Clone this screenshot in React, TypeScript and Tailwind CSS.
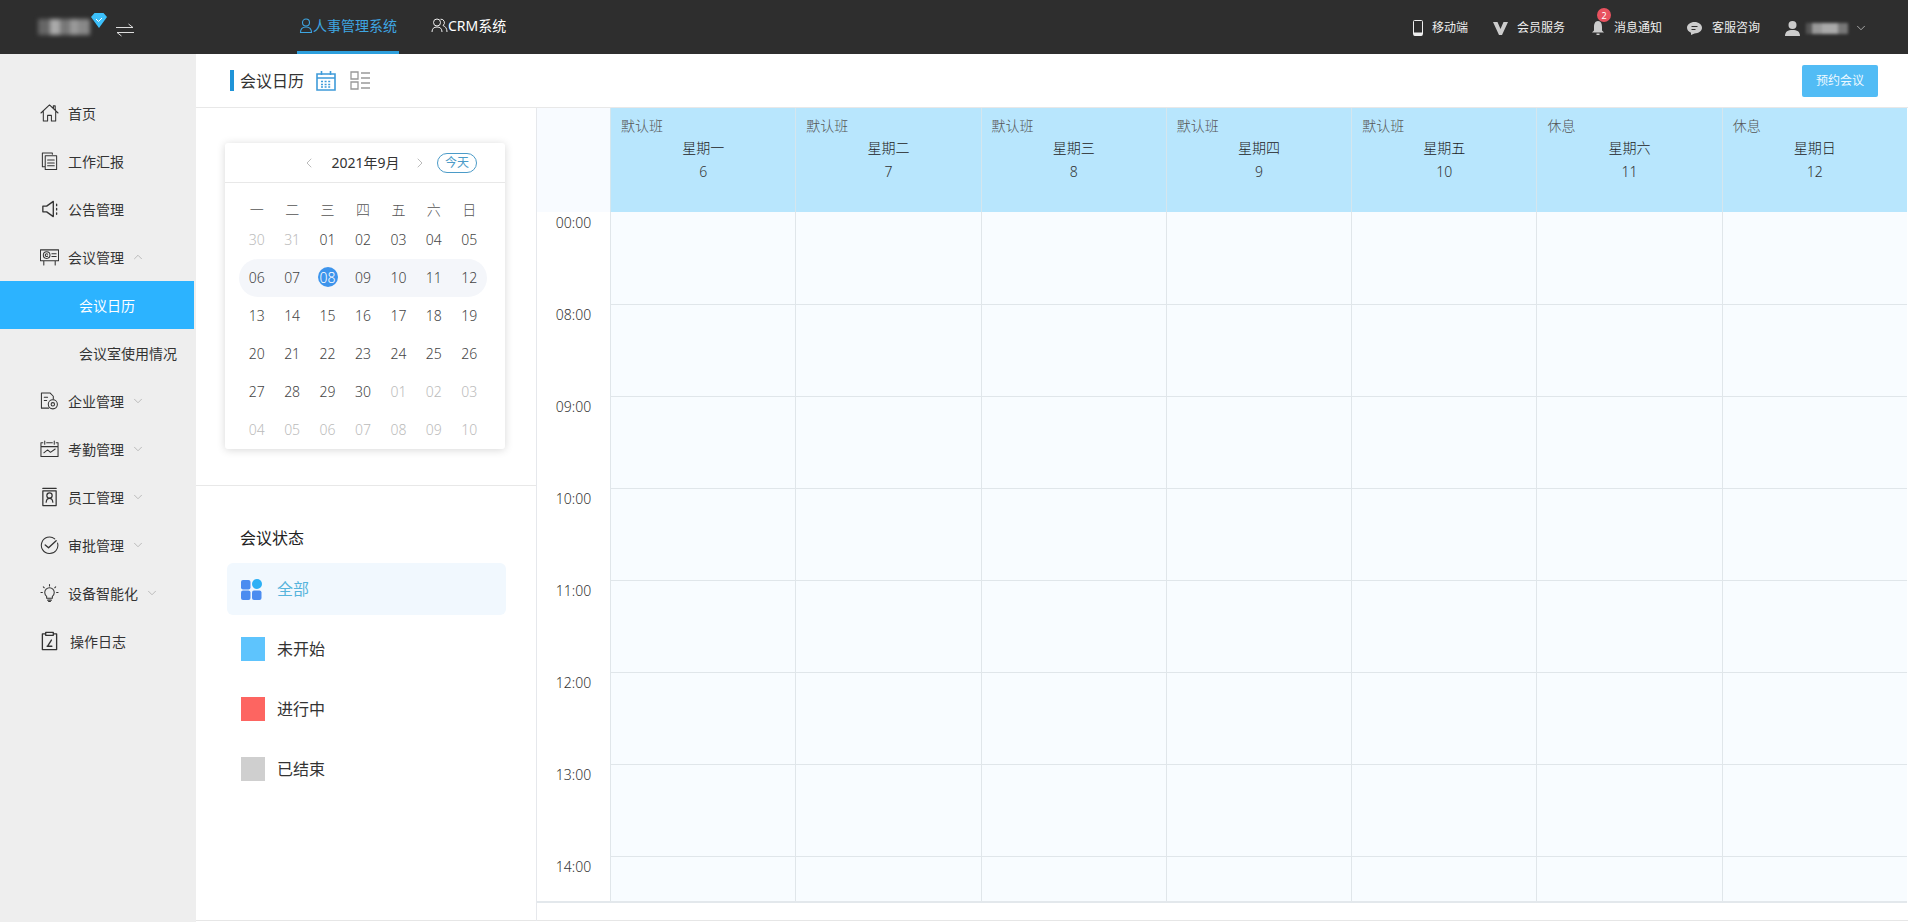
import { ChevronDown, ChevronLeft, ChevronRight, ChevronUp } from "lucide-react";
import type { ReactNode } from "react";

const Stroke = ({ children, size = 20 }: { children: ReactNode; size?: number }) => (
  <svg width={size} height={size} viewBox="0 0 20 20" fill="none" stroke="#333" strokeWidth="1.1" strokeLinejoin="round" strokeLinecap="round">
    {children}
  </svg>
);

const menu = [
  {
    label: "首页",
    icon: (
      <Stroke>
        <path d="M1 10 10 1.5 19 10M3.5 8.5V18.5H8V12.5H12V18.5H16.5V8.5M14 5V2.5H16V7" />
      </Stroke>
    ),
  },
  {
    label: "工作汇报",
    icon: (
      <Stroke>
        <path d="M13 3V1.5H2.5V16H5M5.5 4.5H17.5V19H5.5ZM8 9H15M8 12H15M8 15H15" />
      </Stroke>
    ),
  },
  {
    label: "公告管理",
    icon: (
      <Stroke>
        <path strokeWidth="1.4" d="M3 7H7L14 2V18L7 13H3ZM17.5 5V6.5M17.5 9.5V11M17.5 14V15.5" />
      </Stroke>
    ),
  },
  {
    label: "会议管理",
    arrow: "up",
    icon: (
      <Stroke>
        <path d="M.5 2.5H19.5V14H.5ZM4 14V18.5M16 14V18.5M12.5 6.5H17M12.5 9.5H17" />
        <circle cx="7" cy="8" r="3.5" />
        <path d="M8 7a1.4 1.4 0 1 0 0 2" />
      </Stroke>
    ),
  },
  { label: "会议日历", sub: true, active: true },
  { label: "会议室使用情况", sub: true },
  {
    label: "企业管理",
    arrow: "down",
    icon: (
      <Stroke>
        <path d="M9 17.5H1.5V1.5H10.5L14 5V8M4.5 6H8M4.5 9.5H7" />
        <circle cx="13.5" cy="13.5" r="4.8" />
        <circle cx="13.5" cy="13.5" r="1.8" />
      </Stroke>
    ),
  },
  {
    label: "考勤管理",
    arrow: "down",
    icon: (
      <Stroke>
        <path d="M1 3.5H3M7 3.5H13M17 3.5H19V18H1V3.5M5 1.5V5M15 1.5V5M1 7.5H19M4 14 8 11 11 13.5 16 10" />
      </Stroke>
    ),
  },
  {
    label: "员工管理",
    arrow: "down",
    icon: (
      <Stroke>
        <path strokeWidth="1.3" d="M3 1H17M3 3.5H17V19H3ZM6.5 15.5C6.8 12.5 8 11.5 10 11.5S13.2 12.5 13.5 15.5" />
        <circle cx="10" cy="8.5" r="2.8" strokeWidth="1.3" />
      </Stroke>
    ),
  },
  {
    label: "审批管理",
    arrow: "down",
    icon: (
      <Stroke>
        <path d="M15.5 3.5A8.7 8.7 0 1 0 18.5 8" />
        <path strokeWidth="1.4" d="M5.5 10 9 13 17 5.5" />
      </Stroke>
    ),
  },
  {
    label: "设备智能化",
    arrow: "down",
    icon: (
      <Stroke>
        <path d="M7 13.5C5.5 12.5 5 11 5 9.5A5 5 0 0 1 15 9.5C15 11 14.5 12.5 13 13.5V15.5H7ZM8 17.5H12M9 19H11M1 9.5H2.5M17.5 9.5H19M10 1V2.5M3.5 3.5 4.5 4.5M16.5 3.5 15.5 4.5" />
      </Stroke>
    ),
  },
  {
    label: "操作日志",
    shift: "ml-[2px]",
    icon: (
      <Stroke>
        <path strokeWidth="1.4" d="M6 2.5H2.5V19H17.5V2.5H14M6 1H14V4H6ZM12 9 8.5 14.5M7.5 15.5H12.5" />
      </Stroke>
    ),
  },
];

const topLinks = [
  { label: "移动端", className: "ml-[9px] mr-[25px]", icon: <svg width="10" height="16" viewBox="0 0 10 16" fill="none"><rect x=".5" y=".5" width="9" height="15" rx="1" stroke="#eee" /><rect x="1" y="12.5" width="8" height="3" fill="#eee" /></svg> },
  { label: "会员服务", className: "ml-[9px] mr-[27px]", icon: <svg width="15" height="13" viewBox="0 0 15 13"><path d="M0 0H4.5L7.5 7 10.5 0H15L9 13H6Z" fill="#ccc" /></svg> },
  { label: "消息通知", className: "ml-[10px] mr-[25px]", bell: true, icon: <svg width="12" height="14" viewBox="0 0 12 14"><path d="M6 0C9 0 10 3 10 6V9.5L12 11.5H0L2 9.5V6C2 3 3 0 6 0ZM4.5 12.5H7.5V14H4.5Z" fill="#ccc" /></svg> },
  { label: "客服咨询", className: "ml-[10px] mr-[25px]", icon: <svg width="15" height="13" viewBox="0 0 15 13"><path d="M7.5 0C11.6 0 15 2.5 15 5.8S11.6 11.5 7.5 11.5L4 13V10.7C1.6 9.8 0 8 0 5.8 0 2.5 3.4 0 7.5 0Z" fill="#ccc" /><path d="M4.5 4.5H10.5M4.5 7.5H8.5" stroke="#2e2e2e" strokeWidth="1.2" /></svg> },
];

const weekdays = ["一", "二", "三", "四", "五", "六", "日"];
const dayRows = [
  ["30", "31", "01", "02", "03", "04", "05"],
  ["06", "07", "08", "09", "10", "11", "12"],
  ["13", "14", "15", "16", "17", "18", "19"],
  ["20", "21", "22", "23", "24", "25", "26"],
  ["27", "28", "29", "30", "01", "02", "03"],
  ["04", "05", "06", "07", "08", "09", "10"],
];

const columns = [
  { shift: "默认班", day: "星期一", date: 6 },
  { shift: "默认班", day: "星期二", date: 7 },
  { shift: "默认班", day: "星期三", date: 8 },
  { shift: "默认班", day: "星期四", date: 9 },
  { shift: "默认班", day: "星期五", date: 10 },
  { shift: "休息", day: "星期六", date: 11 },
  { shift: "休息", day: "星期日", date: 12 },
];

const times = ["00:00", "08:00", "09:00", "10:00", "11:00", "12:00", "13:00", "14:00"];

const statuses = [
  { label: "未开始", color: "bg-[#5ec4fd]" },
  { label: "进行中", color: "bg-[#fd6561]" },
  { label: "已结束", color: "bg-[#cfcfcf]" },
];

const isMuted = (row: number, col: number) => (row === 0 && col < 2) || (row === 4 && col > 3) || row === 5;

const Sidebar = () => (
  <aside className="w-[196px] shrink-0 bg-[#eeeeee] pt-[35px]">
    {menu.map((item) => (
      <div
        key={item.label}
        className={`flex h-[48px] w-[194px] items-center text-[14px] ${item.active ? "bg-[#2cb3ff] text-white" : "text-[#333]"} ${item.sub ? "pl-[79px]" : "pl-[40px]"}`}
      >
        {item.icon && <span className="mr-[9px] flex w-[19px] justify-center">{item.icon}</span>}
        <span className={item.shift}>{item.label}</span>
        {item.arrow === "up" && <ChevronUp size={14} strokeWidth={1.3} color="#aaa" className="ml-[7px]" />}
        {item.arrow === "down" && <ChevronDown size={14} strokeWidth={1.3} color="#aaa" className="ml-[7px]" />}
      </div>
    ))}
  </aside>
);

const TopBar = () => (
  <header className="flex h-[54px] items-center bg-[#2e2e2e] text-[#eee]">
    <div className="ml-[38px] flex h-[16px] w-[52px] blur-[2px]">
      <div className="w-[12px] bg-[#666]" />
      <div className="w-[10px] bg-[#aaa]" />
      <div className="w-[10px] bg-[#777]" />
      <div className="w-[8px] bg-[#999]" />
      <div className="w-[12px] bg-[#888]" />
    </div>
    <svg width="16" height="15" viewBox="0 0 16 15" className="mb-[14px] ml-[1px]"><path d="M0 4 3.5 0H12.5L16 4 8 15Z" fill="#3cc0fb" /><path d="M5 6 7.5 8.5 11 5" fill="none" stroke="#fff" /></svg>
    <svg width="18" height="14" viewBox="0 0 18 14" fill="none" stroke="#ddd" className="ml-[9px] mt-[5px]"><path d="M0 4.5H17L12.5 1M18 9.5H1L5.5 13" /></svg>
    <nav className="ml-[163px] flex h-full">
      <div className="flex w-[102px] items-center justify-center border-b-[3px] border-[#2d9fdc] text-[14px] text-[#3ea6e2]">
        <svg width="14" height="16" viewBox="0 0 14 16" fill="none" stroke="#3ea6e2" strokeWidth="1.1"><circle cx="7" cy="4.5" r="3.5" /><path d="M1.5 14.5C1.5 10.5 3.5 9 7 9S12.5 10.5 12.5 14.5Z" /></svg>
        人事管理系统
      </div>
      <div className="ml-[32px] flex items-center pb-[3px] text-[14px] text-white">
        <svg width="17" height="16" viewBox="0 0 17 16" fill="none" stroke="#eee" strokeWidth="1"><circle cx="6" cy="4.5" r="3.5" /><path d="M1 14C1 10.5 3 9 6 9S11 10.5 11 14M9.5 1.2A3.5 3.5 0 0 1 12 7.5C14.5 8.5 16 10.5 16 14" /></svg>
        CRM系统
      </div>
    </nav>
    <div className="ml-auto flex items-center pr-[40px] pt-[2px] text-[12px]">
      {topLinks.map((link) => (
        <div key={link.label} className="relative flex items-center">
          {link.icon}
          {link.bell && (
            <span className="absolute left-[5px] top-[-11px] flex size-[14px] items-center justify-center rounded-full bg-[#e8525f] text-[9px] leading-none text-white">2</span>
          )}
          <span className={link.className}>{link.label}</span>
        </div>
      ))}
      <svg width="15" height="15" viewBox="0 0 15 15"><circle cx="7.5" cy="4" r="4" fill="#ccc" /><path d="M0 15C0 10.5 3 9 7.5 9S15 10.5 15 15Z" fill="#ccc" /></svg>
      <div className="ml-[6px] flex h-[11px] w-[42px] blur-[1.5px]">
        <div className="w-[6px] bg-[#555]" />
        <div className="w-[10px] bg-[#999]" />
        <div className="w-[16px] bg-[#aaa]" />
        <div className="w-[10px] bg-[#777]" />
      </div>
      <ChevronDown size={14} strokeWidth={1.3} color="#ccc" className="ml-[6px]" />
    </div>
  </header>
);

const MiniCalendar = () => (
  <div className="ml-[29px] h-[306px] w-[280px] rounded-[3px] shadow-[0_1px_8px_rgba(0,0,0,0.16)]">
    <div className="relative flex h-[40px] items-center justify-center border-b border-[#e8e8e8] text-[14px] text-[#333]">
      <ChevronLeft size={16} strokeWidth={1} color="#999" className="absolute left-[76px]" />
      <span className="ml-[1px]">2021年9月</span>
      <ChevronRight size={16} strokeWidth={1} color="#999" className="absolute left-[187px]" />
      <span className="absolute left-[212px] flex h-[20px] w-[40px] items-center justify-center rounded-full border border-[#4b9bc8] text-[12px] text-[#4b9bc8]">今天</span>
    </div>
    <div className="ml-[14px] w-[248px] pt-[15px] text-[14px] font-light">
      <div className="grid h-[23px] grid-cols-7 items-center text-center text-[#555]">
        {weekdays.map((day) => (
          <span key={day}>{day}</span>
        ))}
      </div>
      {dayRows.map((row, r) => (
        <div key={r} className={`grid h-[38px] grid-cols-7 items-center justify-items-center rounded-full pb-[2px] ${r === 1 ? "bg-[#f4f6fa]" : ""}`}>
          {row.map((day, c) =>
            r === 1 && c === 2 ? (
              <span key={c} className="flex size-[20px] items-center justify-center rounded-full bg-[#3d94ec] text-white">{day}</span>
            ) : (
              <span key={c} className={isMuted(r, c) ? "text-[#bbb]" : "text-[#444]"}>{day}</span>
            ),
          )}
        </div>
      ))}
    </div>
  </div>
);

const StatusPanel = () => (
  <div>
    <div className="ml-[44px] pt-[40px] text-[16px] leading-[24px] text-[#222]">会议状态</div>
    <div className="ml-[31px] mt-[13px] flex h-[52px] w-[279px] items-center rounded-[6px] bg-[#f1f8fe] pl-[14px] text-[16px] text-[#56b4dc]">
      <svg width="21" height="21" viewBox="0 0 21 21">
        <rect x="0" y="1" width="9.5" height="9.5" rx="2" fill="#4b8cf0" />
        <circle cx="16" cy="5" r="5" fill="#2cb0f5" />
        <rect x="0" y="11.5" width="9.5" height="9.5" rx="2" fill="#4b8cf0" />
        <rect x="11" y="11.5" width="9.5" height="9.5" rx="2" fill="#4b8cf0" />
      </svg>
      <span className="ml-[15px]">全部</span>
    </div>
    <div className="mt-[4px]">
      {statuses.map((status) => (
        <div key={status.label} className="ml-[45px] flex h-[60px] items-center text-[16px] text-[#333]">
          <span className={`size-[24px] ${status.color}`} />
          <span className="ml-[12px]">{status.label}</span>
        </div>
      ))}
    </div>
  </div>
);

const WeekGrid = () => (
  <div className="min-w-0 flex-1 pr-[1px]">
    <div className="grid grid-cols-[73px_repeat(7,minmax(0,1fr))] border-b-2 border-[#e3e8ec]">
      <div className="h-[104px] bg-[#f8fbff]" />
      {columns.map((col) => (
        <div key={col.day} className="h-[104px] border-l border-[#d5e6ee] bg-[#b8e6fd] px-[10px] pt-[7px] text-[14px] font-light leading-[22px]">
          <div className="text-[#555]">{col.shift}</div>
          <div className="text-center text-[#222]">{col.day}</div>
          <div className="mt-[2px] text-center text-[#333]">{col.date}</div>
        </div>
      ))}
      {times.map((time, i) => (
        <div key={time} className="contents">
          <div className={`text-center text-[14px] font-light leading-[22px] text-[#333] ${i === 7 ? "h-[45px]" : "h-[92px]"}`}>{time}</div>
          {columns.map((col) => (
            <div key={col.day} className={`border-l border-[#e0e6ea] bg-[#f8fcff] ${i === 0 ? "" : "border-t"}`} />
          ))}
        </div>
      ))}
    </div>
  </div>
);

export default function App() {
  return (
    <div className="h-[922px] w-[1908px] overflow-hidden bg-white font-['Noto_Sans','Noto_Sans_CJK_SC',sans-serif]">
      <TopBar />
      <div className="flex h-[868px]">
        <Sidebar />
        <main className="h-[867px] min-w-0 flex-1 border-b border-[#e6e6e6]">
          <div className="flex h-[54px] items-center border-b border-[#e8e8e8] pl-[34px] pr-[30px]">
            <span className="h-[21px] w-[4px] bg-[#1f94d8]" />
            <span className="ml-[6px] text-[16px] text-[#333]">会议日历</span>
            <svg width="20" height="21" viewBox="0 0 20 21" fill="none" stroke="#3f9bd9" strokeWidth="1.6" className="ml-[12px]">
              <path d="M1 4H19V20H1ZM1 8H19M5.5 1V5M14.5 1V5" />
              <path d="M5 11.5H15M5 14.5H15M5 17H15" strokeWidth="1.4" strokeDasharray="2 1.6" />
            </svg>
            <svg width="20" height="19" viewBox="0 0 20 19" fill="none" stroke="#999" strokeWidth="1.3" className="ml-[14px]">
              <path d="M1 1H8V8H1ZM1 11H8V18H1ZM11 2H20M11 7H20M11 12H20M11 17H20" />
            </svg>
            <button className="ml-auto h-[32px] w-[76px] rounded-[2px] bg-[#52bcf5] text-[12px] text-[#eef9ff]">预约会议</button>
          </div>
          <div className="flex">
            <div className="h-[813px] w-[341px] shrink-0 border-r border-[#e6e8ec]">
              <div className="h-[378px] border-b border-[#e8e8e8] pt-[35px]">
                <MiniCalendar />
              </div>
              <StatusPanel />
            </div>
            <WeekGrid />
          </div>
        </main>
      </div>
    </div>
  );
}
